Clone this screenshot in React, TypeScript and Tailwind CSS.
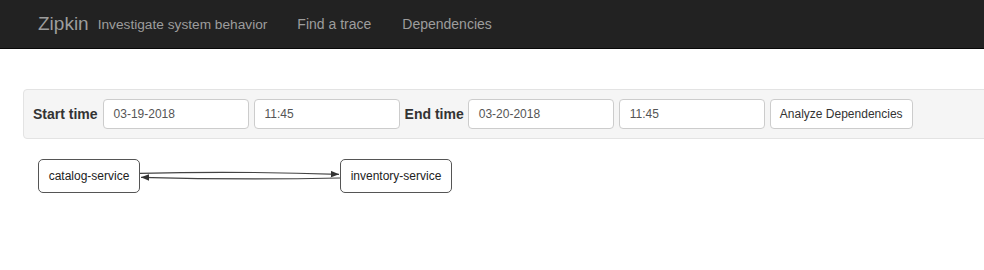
const font = { fontFamily: '"Liberation Sans", Arial, sans-serif' };

const Field = ({ value }: { value: string }) => (
  <div className="h-[30px] w-[146px] rounded-[4px] border border-[#cccccc] bg-white pl-[10px] text-[12px] leading-[28px] text-[#555555]">
    {value}
  </div>
);

const Node = ({ label, className }: { label: string; className: string }) => (
  <div
    className={
      "absolute top-0 flex h-[34px] items-center justify-center rounded-[5px] border border-[#555555] bg-white text-[12px] text-[#222222] " +
      className
    }
  >
    {label}
  </div>
);

export default function App() {
  return (
    <div className="h-[270px] w-full overflow-hidden bg-white" style={font}>
      <nav className="flex h-[49px] items-center border-b border-[#080808] bg-[#222222] pt-[1px] text-[#9d9d9d]">
        <span className="ml-[38px] text-[19px]">Zipkin</span>
        <span className="ml-[9px] mt-[2px] text-[13.7px]">Investigate system behavior</span>
        <span className="ml-[30px] text-[14px]">Find a trace</span>
        <span className="ml-[31px] text-[14px]">Dependencies</span>
      </nav>

      <div className="ml-[23px] mt-[40px] flex h-[50px] w-[1000px] items-center rounded-[4px] border border-[#e3e3e3] bg-[#f5f5f5] pl-[9px] text-[#333333]">
        <span className="mr-[5px] text-[14px] font-bold">Start time</span>
        <Field value="03-19-2018" />
        <div className="w-[5px]" />
        <Field value="11:45" />
        <span className="ml-[5px] mr-[4px] text-[14px] font-bold">End time</span>
        <Field value="03-20-2018" />
        <div className="w-[5px]" />
        <Field value="11:45" />
        <button className="ml-[5px] h-[30px] w-[143px] rounded-[4px] border border-[#cccccc] bg-white text-[12px] text-[#333333]">
          Analyze Dependencies
        </button>
      </div>

      <div className="relative mt-[20px] h-[40px] w-full">
        <svg className="absolute left-0 top-0" width="500" height="40" viewBox="0 0 500 40">
          <defs>
            <marker id="arr" viewBox="0 0 10 10" refX="10" refY="5" markerWidth="7" markerHeight="7" orient="auto">
              <path d="M0,1 L10,5 L0,9 z" fill="#333" />
            </marker>
          </defs>
          <path d="M140,14.3 Q240,12 339,15.3" fill="none" stroke="#444" strokeWidth="1.2" markerEnd="url(#arr)" />
          <path d="M340,19 Q240,21 141,18.3" fill="none" stroke="#444" strokeWidth="1.2" markerEnd="url(#arr)" />
        </svg>
        <Node label="catalog-service" className="left-[38px] w-[102px]" />
        <Node label="inventory-service" className="left-[340px] w-[112px]" />
      </div>
    </div>
  );
}
